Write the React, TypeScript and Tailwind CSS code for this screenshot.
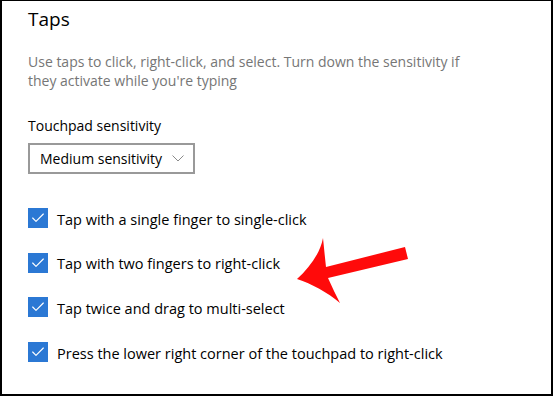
import { Check } from 'lucide-react';

const options = [
    'Tap with a single finger to single-click',
    'Tap with two fingers to right-click',
    'Tap twice and drag to multi-select',
    'Press the lower right corner of the touchpad to right-click',
];

function Arrow() {
    return (
        <svg className="absolute left-0 top-0 pointer-events-none" width="554" height="397" viewBox="0 0 554 397">
            <path
                d="M297,279 C309,268 320,254 323,238 C324,248 325,258 326,267 L405,247 L408,259 L328,278 C332,287 336,295 340,303 C327,292 312,284 297,279 Z"
                fill="#ff0a0a"
            />
        </svg>
    );
}

export default function App() {
    return (
        <div className="relative w-[554px] h-[397px] bg-white" style={{ fontFamily: '"Open Sans", "Noto Sans", sans-serif' }}>
            <div className="w-[553px] h-[396px] border-l-2 border-t border-r-2 border-b-2 border-black pl-[26px] pt-[5px]">
                <h1 className="text-[19px] leading-[26px] text-black">Taps</h1>

                <p className="mt-[20px] w-[460px] text-[14px] leading-[19px] text-[#767676]">
                    Use taps to click, right-click, and select. Turn down the sensitivity if they activate while you're typing
                </p>

                <div className="mt-[26px] text-[14px] leading-[19px] text-black">Touchpad sensitivity</div>

                <button className="mt-[8px] flex items-center w-[167px] h-[31px] border-2 border-[#999999] pl-[10px] text-[14px] leading-[19px] text-black">
                    <span>Medium sensitivity</span>
                    <svg className="ml-[10px]" width="12" height="7" viewBox="0 0 12 7" fill="none">
                        <path d="M0.5,0.5 L6,6 L11.5,0.5" stroke="#8a8a8a" strokeWidth="1" />
                    </svg>
                </button>

                <div className="mt-[34px] flex flex-col gap-[24.7px]">
                    {options.map(label => (
                        <label key={label} className="flex items-start gap-[9px] h-[20px] text-[14.5px] leading-[20px] text-black">
                            <span className="flex items-center justify-center w-[20px] h-[20px] bg-[#2b78d4] shrink-0">
                                <Check className="w-[16px] h-[16px] text-white" strokeWidth={1.75} />
                            </span>
                            <span className="pt-[1.5px]">{label}</span>
                        </label>
                    ))}
                </div>
            </div>
            <Arrow />
        </div>
    );
}
